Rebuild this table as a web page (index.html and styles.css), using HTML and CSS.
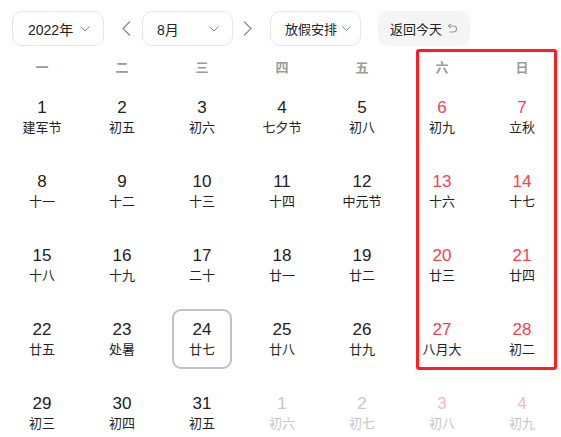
FILE: index.html
```html
<!DOCTYPE html>
<html lang="zh-CN">
<head>
<meta charset="utf-8">
<title>日历</title>
<link rel="stylesheet" href="styles.css">
</head>
<body>
<div class="page">
  <div class="toolbar">
    <div class="select select-year"><span>2022年</span><svg class="chev" width="10" height="6" viewBox="0 0 10 6"><path d="M0.5 0.5 L5 5 L9.5 0.5" fill="none" stroke="#888" stroke-width="1"/></svg></div>
    <span class="arrow arrow-prev"><svg width="9" height="15" viewBox="0 0 9 15"><path d="M8 0.5 L1 7.5 L8 14.5" fill="none" stroke="#888" stroke-width="1.2"/></svg></span>
    <div class="select select-month"><span>8月</span><svg class="chev" width="10" height="6" viewBox="0 0 10 6"><path d="M0.5 0.5 L5 5 L9.5 0.5" fill="none" stroke="#888" stroke-width="1"/></svg></div>
    <span class="arrow arrow-next"><svg width="9" height="15" viewBox="0 0 9 15"><path d="M1 0.5 L8 7.5 L1 14.5" fill="none" stroke="#888" stroke-width="1.2"/></svg></span>
    <div class="select select-holiday"><span class="holiday-text">放假安排</span><svg class="chev chev-small" width="9" height="5" viewBox="0 0 9 5"><path d="M0.5 0.5 L4.5 4.5 L8.5 0.5" fill="none" stroke="#888" stroke-width="1"/></svg></div>
    <div class="today-btn"><span>返回今天</span><svg class="back-icon" width="10" height="11" viewBox="0 0 10 11"><path d="M1.5 3 H6.5 A3 3 0 0 1 6.5 9 H2.5" fill="none" stroke="#999" stroke-width="1.1"/><path d="M3.8 0.8 L1.5 3 L3.8 5.2" fill="none" stroke="#999" stroke-width="1.1"/></svg></div>
  </div>

  <div class="weekdays">
    <span>一</span><span>二</span><span>三</span><span>四</span><span>五</span><span>六</span><span>日</span>
  </div>

  <div class="grid">
    <div class="cell"><div class="day"><span class="num">1</span><span class="lunar">建军节</span></div></div>
    <div class="cell"><div class="day"><span class="num">2</span><span class="lunar">初五</span></div></div>
    <div class="cell"><div class="day"><span class="num">3</span><span class="lunar">初六</span></div></div>
    <div class="cell"><div class="day"><span class="num">4</span><span class="lunar">七夕节</span></div></div>
    <div class="cell"><div class="day"><span class="num">5</span><span class="lunar">初八</span></div></div>
    <div class="cell weekend"><div class="day"><span class="num">6</span><span class="lunar">初九</span></div></div>
    <div class="cell weekend"><div class="day"><span class="num">7</span><span class="lunar">立秋</span></div></div>

    <div class="cell"><div class="day"><span class="num">8</span><span class="lunar">十一</span></div></div>
    <div class="cell"><div class="day"><span class="num">9</span><span class="lunar">十二</span></div></div>
    <div class="cell"><div class="day"><span class="num">10</span><span class="lunar">十三</span></div></div>
    <div class="cell"><div class="day"><span class="num">11</span><span class="lunar">十四</span></div></div>
    <div class="cell"><div class="day"><span class="num">12</span><span class="lunar">中元节</span></div></div>
    <div class="cell weekend"><div class="day"><span class="num">13</span><span class="lunar">十六</span></div></div>
    <div class="cell weekend"><div class="day"><span class="num">14</span><span class="lunar">十七</span></div></div>

    <div class="cell"><div class="day"><span class="num">15</span><span class="lunar">十八</span></div></div>
    <div class="cell"><div class="day"><span class="num">16</span><span class="lunar">十九</span></div></div>
    <div class="cell"><div class="day"><span class="num">17</span><span class="lunar">二十</span></div></div>
    <div class="cell"><div class="day"><span class="num">18</span><span class="lunar">廿一</span></div></div>
    <div class="cell"><div class="day"><span class="num">19</span><span class="lunar">廿二</span></div></div>
    <div class="cell weekend"><div class="day"><span class="num">20</span><span class="lunar">廿三</span></div></div>
    <div class="cell weekend"><div class="day"><span class="num">21</span><span class="lunar">廿四</span></div></div>

    <div class="cell"><div class="day"><span class="num">22</span><span class="lunar">廿五</span></div></div>
    <div class="cell"><div class="day"><span class="num">23</span><span class="lunar">处暑</span></div></div>
    <div class="cell"><div class="day selected"><span class="num">24</span><span class="lunar">廿七</span></div></div>
    <div class="cell"><div class="day"><span class="num">25</span><span class="lunar">廿八</span></div></div>
    <div class="cell"><div class="day"><span class="num">26</span><span class="lunar">廿九</span></div></div>
    <div class="cell weekend"><div class="day"><span class="num">27</span><span class="lunar">八月大</span></div></div>
    <div class="cell weekend"><div class="day"><span class="num">28</span><span class="lunar">初二</span></div></div>

    <div class="cell"><div class="day"><span class="num">29</span><span class="lunar">初三</span></div></div>
    <div class="cell"><div class="day"><span class="num">30</span><span class="lunar">初四</span></div></div>
    <div class="cell"><div class="day"><span class="num">31</span><span class="lunar">初五</span></div></div>
    <div class="cell other"><div class="day"><span class="num">1</span><span class="lunar">初六</span></div></div>
    <div class="cell other"><div class="day"><span class="num">2</span><span class="lunar">初七</span></div></div>
    <div class="cell other weekend"><div class="day"><span class="num">3</span><span class="lunar">初八</span></div></div>
    <div class="cell other weekend"><div class="day"><span class="num">4</span><span class="lunar">初九</span></div></div>
  </div>

  <div class="highlight"></div>
</div>
</body>
</html>
```
FILE: styles.css
```css
html, body {
  margin: 0;
  padding: 0;
  overflow: hidden;
  background: #fff;
}

body {
  font-family: "Liberation Sans", "Noto Sans CJK SC", sans-serif;
  color: #222;
}

.page {
  position: relative;
  width: 561px;
  height: 437px;
  padding-top: 11px;
  box-sizing: border-box;
}

.toolbar {
  display: flex;
  align-items: center;
  height: 35px;
  padding-left: 12px;
}

.select {
  display: flex;
  align-items: center;
  justify-content: space-between;
  box-sizing: border-box;
  height: 35px;
  border: 1px solid #e6e6e6;
  border-radius: 10px;
  font-size: 14px;
  color: #222;
  padding: 0 13px 0 15px;
  flex-shrink: 0;
}

.select-year {
  width: 92px;
}

.select-month {
  width: 91px;
  padding-left: 14px;
}

.select-holiday {
  width: 91px;
  margin-left: 18px;
  padding: 0 0 0 14px;
  justify-content: flex-start;
  gap: 5px;
  font-size: 13px;
}

.holiday-text {
  white-space: nowrap;
  letter-spacing: 0;
}

.chev {
  display: block;
  flex-shrink: 0;
}

.arrow {
  display: flex;
  align-items: center;
  width: 9px;
  height: 35px;
  flex-shrink: 0;
}

.arrow svg {
  display: block;
}

.arrow-prev {
  margin-left: 18px;
  margin-right: 11px;
}

.arrow-next {
  margin-left: 10px;
}

.today-btn {
  display: flex;
  align-items: center;
  box-sizing: border-box;
  height: 35px;
  width: 92px;
  margin-left: 17px;
  padding-left: 12px;
  background: #f5f5f5;
  border-radius: 10px;
  font-size: 13px;
  color: #222;
  flex-shrink: 0;
}

.back-icon {
  display: block;
  margin-left: 5px;
  margin-top: -1px;
}

.weekdays {
  display: grid;
  grid-template-columns: repeat(7, 80px);
  margin-left: 2px;
  margin-top: 10px;
  height: 24px;
  line-height: 24px;
  font-size: 13px;
  font-weight: bold;
  color: #9a9a9a;
  text-align: center;
}

.grid {
  display: grid;
  grid-template-columns: repeat(7, 80px);
  grid-auto-rows: 74px;
  margin-left: 2px;
}

.cell {
  display: flex;
  align-items: center;
  justify-content: center;
}

.day {
  box-sizing: border-box;
  width: 60px;
  height: 60px;
  border: 2px solid transparent;
  border-radius: 9px;
  padding-top: 9px;
  display: flex;
  flex-direction: column;
  align-items: center;
}

.day.selected {
  border-color: #c2c2c2;
}

.num {
  font-size: 17px;
  line-height: 20px;
  height: 20px;
  color: #222;
}

.lunar {
  font-size: 13px;
  line-height: 20px;
  height: 20px;
  color: #222;
  white-space: nowrap;
}

.weekend .num {
  color: #f5424f;
}

.other .num,
.other .lunar {
  color: #c6c6c6;
}

.other.weekend .num {
  color: #f7b7bc;
}

.highlight {
  position: absolute;
  left: 416px;
  top: 49px;
  width: 141px;
  height: 321px;
  box-sizing: border-box;
  border: 3px solid #ff1f1f;
  border-radius: 3px;
  pointer-events: none;
}
```
